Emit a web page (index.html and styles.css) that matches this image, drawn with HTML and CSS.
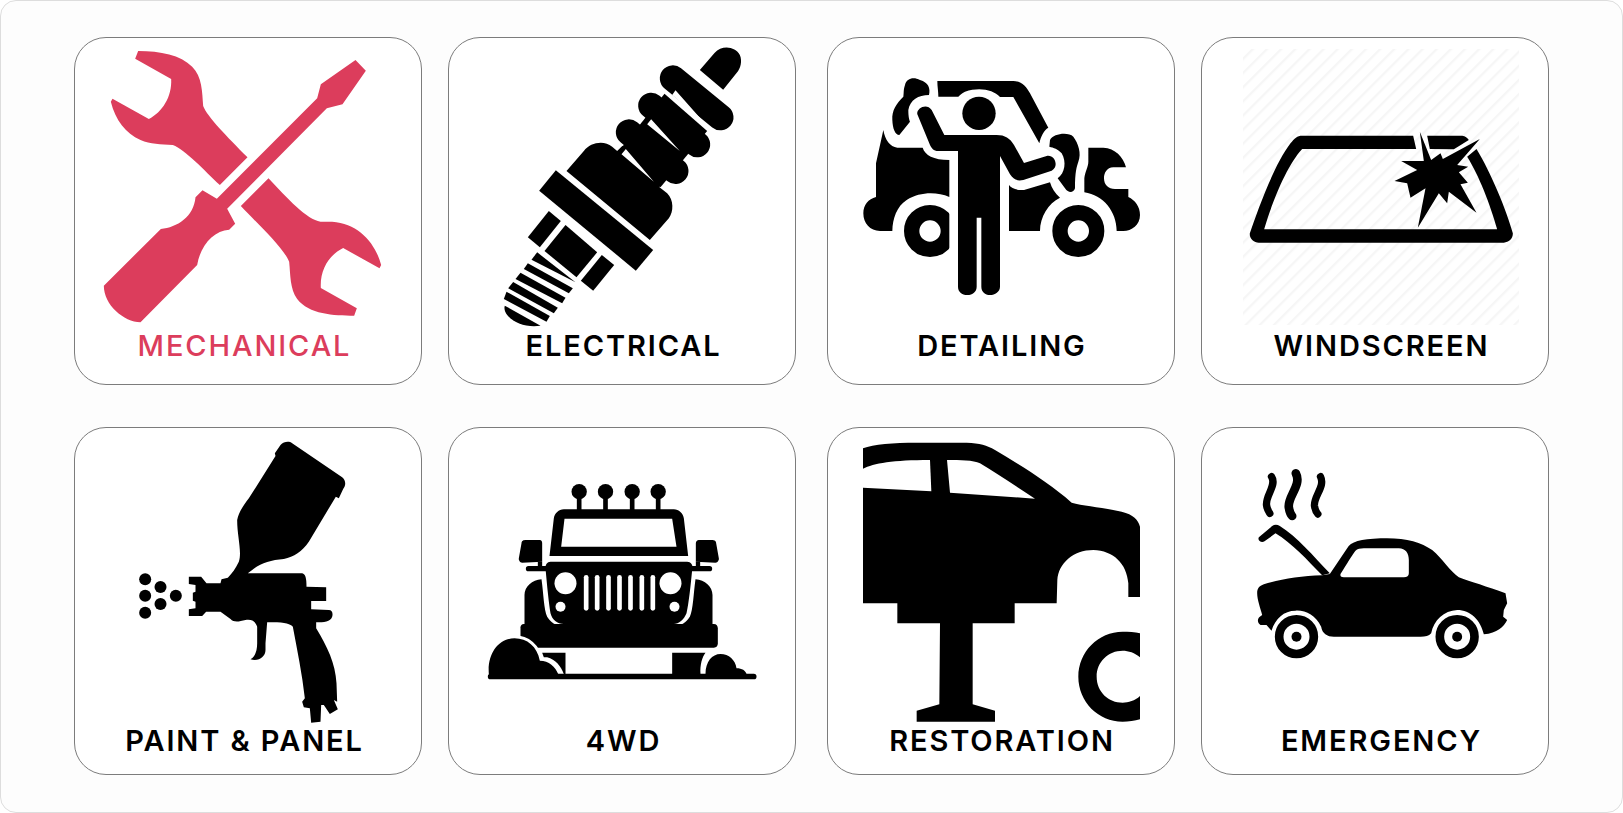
FILE: index.html
```html
<!DOCTYPE html>
<html lang="en">
<head>
    <meta charset="UTF-8">
    <meta name="viewport" content="width=device-width, initial-scale=1.0">
    <title>Services</title>
    <link rel="stylesheet" href="styles.css">
</head>
<body>
    <main class="panel">
        <div class="service-grid">
            <a class="card card-active">
                <svg class="card-icon" viewBox="136.5 72 828 828" aria-hidden="true">
                    <path d="M233 78C300 78 360 90 395 125C425 155 425 200 428 243C440 275 500 335 561 397L478 480C430 435 375 375 337 360C300 358 270 358 240 345C195 325 165 285 151 230L156 221L265 282C305 262 335 215 332 162L224 101Z"/>
                    <path d="M624 460L541 543C590 595 670 670 686 710C690 750 688 790 710 822C745 868 820 872 881 872L889 850L781 789C778 735 805 690 848 669L957 730L962 720C945 655 895 595 815 590L780 590C740 585 680 520 624 460Z"/>
                    <path d="M885 105L916 137L846 238L799 250L500 551L524 596L506 614C460 617 420 660 410 720L240 892C190 890 130 840 130 782L301 612C350 608 400 575 405 517L426 496L469 521L770 220L781 178Z"/>
                </svg>
                <span class="card-label">MECHANICAL</span>
            </a>

            <a class="card">
                <svg class="card-icon" viewBox="133.5 72 828 828" aria-hidden="true">
                    <path d="M778 135L822 84C845 58 885 65 898 90C906 108 900 130 890 142L848 194Z"/>
                    <path d="M697 160L840 277M632 242L770 358M565 322L705 438" fill="none" stroke="#000" stroke-width="78" stroke-linecap="round"/>
                    <path d="M672 206L540 372L660 487L800 318Z"/>
                    <path d="M378 438L430 378C450 352 490 345 515 365L530 378L546 362L660 480L657 487L680 505C700 525 700 560 685 580L628 645Z"/>
                    <path class="cut" d="M695 210L705 196L790 292ZM620 298L632 283L718 378ZM543 388L556 372L640 470Z"/>
                    <path d="M346 436L638 675L586 737L296 497Z"/>
                    <path d="M375 600L470 682L408 757L312 678Z"/>
                    <path d="M325 558L361 588L298 667L262 637Z"/>
                    <path d="M484 690L521 720L458 797L421 767Z"/>
                    <path d="M290 682L405 772L273 704Z"/>
                    <path d="M262 715L397 790L385 805L250 732Z"/>
                    <path d="M240 743L375 818L365 835L225 762Z"/>
                    <path d="M218 771L352 848L340 865L203 790Z"/>
                    <path d="M198 800L328 873L318 890L190 822Z"/>
                    <path d="M193 842L300 902C260 908 220 895 200 870C193 860 190 850 193 842Z"/>
                </svg>
                <span class="card-label">ELECTRICAL</span>
            </a>

            <a class="card">
                <svg class="card-icon" viewBox="129 72 828 828" aria-hidden="true">
                    <path d="M352 168L580 168C605 168 620 185 630 205L685 308C672 315 662 335 658 355L580 216L540 216C520 195 480 185 435 200C425 205 420 210 415 215L355 215C355 200 352 185 352 168Z"/>
                    <path d="M255 180C260 160 280 155 300 165C325 172 332 190 327 210C295 210 270 225 265 255C265 275 268 285 270 290L238 330C225 330 218 310 217 285C215 255 230 235 250 215C252 200 250 195 255 180Z"/>
                    <path d="M190 315C195 345 210 365 232 368L308 368C315 390 340 405 388 405L388 516C350 500 300 500 260 525C230 545 218 580 217 618L180 618C150 618 130 595 130 565C130 540 145 522 168 516L168 415Z"/>
                    <circle cx="330" cy="618" r="55" fill="none" stroke="#000" stroke-width="46"/>
                    <rect class="cut" x="388" y="530" width="26" height="175"/>
                    <path d="M567 480C575 490 590 497 612 495L690 472C695 490 705 505 720 518C685 535 660 575 660 618L567 618Z"/>
                    <path d="M690 345C700 325 745 320 760 335C775 355 785 385 775 410C770 425 765 440 765 490C760 505 745 505 735 490L713 460C735 445 740 410 725 385C715 372 700 368 688 365Z"/>
                    <path d="M805 368L850 368C885 370 910 395 918 427L880 427C860 427 852 445 852 460C852 480 865 492 885 492L925 492L925 516C945 525 960 545 960 570C960 600 935 618 910 618L890 618C890 560 850 510 793 502L793 460C795 440 805 425 805 410Z"/>
                    <circle cx="775" cy="618" r="55" fill="none" stroke="#000" stroke-width="46"/>
                    <circle cx="477" cy="265" r="50"/>
                    <path d="M292 268C288 250 320 232 335 255L373 330L530 330C555 330 570 340 582 360L612 414L680 393C705 388 718 425 695 437L610 465C590 470 580 462 570 448L540 393L540 785C540 800 525 810 510 810C495 810 484 800 484 785L484 578L470 578L470 785C470 800 458 810 442 810C425 810 414 800 414 785L414 378L355 378C340 378 335 370 330 360Z"/>
                </svg>
                <span class="card-label">DETAILING</span>
            </a>

            <a class="card">
                <svg class="card-icon" viewBox="157.5 72 828 828" aria-hidden="true">
                    <defs>
                        <pattern id="hatch" width="30" height="30" patternUnits="userSpaceOnUse" patternTransform="rotate(45)">
                            <rect width="7" height="30" fill="#f6f6f6"/>
                        </pattern>
                    </defs>
                    <rect x="157.5" y="72" width="828" height="828" fill="url(#hatch)"/>
                    <path d="M178 625C200 560 250 420 300 355C312 340 320 332 335 332L668 332L677 372L335 372C290 420 245 530 221 613L920 613C900 540 865 450 830 395L858 372C900 440 950 560 967 625C968 640 955 653 940 653L205 653C190 653 176 640 178 625Z"/>
                    <path d="M710 332L815 332C825 333 830 338 835 345L790 373L718 372Z"/>
                    <path d="M688 320L722 405L750 385L757 402L868 342L800 420L833 425L805 442L832 473L810 478L858 563L775 500L770 535L745 505L682 608L705 490L660 518L650 475L612 468L680 435L632 408L700 408Z"/>
                </svg>
                <span class="card-label">WINDSCREEN</span>
            </a>

            <a class="card">
                <svg class="card-icon" viewBox="136.5 72 828 828" aria-hidden="true">
                    <path d="M660 75C670 65 685 62 695 70L845 172C855 180 858 195 848 207L835 235L826 230L745 365C725 395 700 410 670 417C630 420 600 430 575 450L562 460L725 460C735 462 738 475 738 500L797 502L797 543L752 543L752 568L805 570C815 570 818 580 815 590C810 605 790 607 767 607L767 625C800 680 825 730 828 790L830 845L820 840L832 868L808 882L790 855L782 855L780 905L752 908L748 865L730 862L725 845L733 835C725 760 710 690 697 620C690 612 670 605 620 607L615 670L615 690C615 710 595 725 570 718C585 710 590 690 590 670L590 620C585 605 575 597 555 600C535 605 520 608 510 597L480 575L437 575L425 588L385 588L385 568L405 565L405 545L397 542L397 518L405 515L405 495L385 492L385 470L422 470L438 490L480 490L483 478L502 473C515 460 525 445 535 425C545 395 530 350 530 300C535 275 550 255 565 235L645 108L643 100Z"/>
                    <circle cx="254" cy="478" r="18"/>
                    <circle cx="300" cy="501" r="18"/>
                    <circle cx="254" cy="527" r="18"/>
                    <circle cx="346" cy="527" r="18"/>
                    <circle cx="300" cy="552" r="18"/>
                    <circle cx="254" cy="578" r="18"/>
                </svg>
                <span class="card-label">PAINT &amp; PANEL</span>
            </a>

            <a class="card">
                <svg class="card-icon" viewBox="133.5 72 828 828" aria-hidden="true">
                    <circle cx="416" cy="215" r="23"/>
                    <circle cx="495" cy="215" r="23"/>
                    <circle cx="575" cy="215" r="23"/>
                    <circle cx="653" cy="215" r="23"/>
                    <path d="M409 215h14v60h-14zM488 215h14v60h-14zM568 215h14v60h-14zM646 215h14v60h-14z"/>
                    <path fill-rule="evenodd" d="M327 408L340 295C342 280 355 268 370 268L700 268C715 268 728 280 730 295L743 408ZM372 296L362 380L708 380L695 296Z"/>
                    <path d="M243 370C243 362 250 360 255 360L298 360C303 360 305 365 305 370L305 425L245 428C238 428 234 420 235 415Z"/>
                    <path d="M827 370C827 362 820 360 815 360L775 360C770 360 766 365 766 370L766 425L825 428C832 428 836 420 835 415Z"/>
                    <rect x="256" y="438" width="70" height="16" rx="8"/>
                    <rect x="745" y="438" width="70" height="16" rx="8"/>
                    <path d="M292 425h13v20h-13zM766 425h13v20h-13z"/>
                    <path d="M330 425L740 425C750 425 760 435 755 450C750 500 745 550 738 580C730 600 715 612 700 612L370 612C350 612 335 600 330 580C325 550 320 500 315 445C314 435 320 425 330 425Z"/>
                    <g class="cut">
                        <circle cx="375" cy="490" r="33"/>
                        <circle cx="690" cy="490" r="33"/>
                        <circle cx="360" cy="560" r="15"/>
                        <circle cx="702" cy="560" r="15"/>
                        <rect x="430" y="465" width="14" height="107" rx="7"/>
                        <rect x="463" y="465" width="14" height="107" rx="7"/>
                        <rect x="497" y="465" width="14" height="107" rx="7"/>
                        <rect x="530" y="465" width="14" height="107" rx="7"/>
                        <rect x="563" y="465" width="14" height="107" rx="7"/>
                        <rect x="597" y="465" width="14" height="107" rx="7"/>
                        <rect x="630" y="465" width="14" height="107" rx="7"/>
                    </g>
                    <path d="M303 478C309 520 310 570 320 590C330 605 340 612 345 612L252 612L252 525C252 500 275 480 303 478Z"/>
                    <path d="M765 478C759 520 758 570 748 590C738 605 728 612 723 612L816 612L816 525C816 500 793 480 765 478Z"/>
                    <path d="M250 612L820 612C828 612 832 618 832 625L832 670C832 678 828 683 820 683L250 683C243 683 240 678 240 670L240 622C240 616 244 612 250 612Z"/>
                    <path d="M305 698L375 698L375 762L370 762C362 740 345 718 320 712L310 712Z"/>
                    <path d="M695 698L795 698C785 710 778 735 780 762L695 762Z"/>
                    <path class="halo" d="M145 762C140 700 175 655 222 655C260 655 290 680 298 722C325 722 345 740 353 762Z"/>
                    <path d="M795 762C795 725 815 702 840 702C865 702 885 720 888 745C905 745 915 752 918 762Z"/>
                    <rect x="142" y="761" width="806" height="17" rx="8"/>
                </svg>
                <span class="card-label">4WD</span>
            </a>

            <a class="card">
                <svg class="card-icon" viewBox="129 72 828 828" aria-hidden="true">
                    <path d="M129 85C160 72 220 68 290 68L440 68C480 70 500 75 525 90C600 135 690 190 755 248C790 258 850 262 905 275C940 283 955 300 960 320L960 531L925 531L925 490C920 430 880 392 820 390C760 390 715 430 712 480L710 550L584 550L584 610L458 610L458 853L525 872L525 905L290 905L290 872L358 853L360 610L232 610L232 550L129 550Z"/>
                    <path class="cut" d="M129 146C160 130 220 120 330 120L334 214L129 203Z"/>
                    <path class="cut" d="M381 120C420 120 460 120 480 130C530 160 590 200 645 236L390 218Z"/>
                    <path d="M960 640C945 636 925 635 908 635C835 635 775 695 775 770C775 845 835 905 908 905C925 905 945 903 960 898L960 828C945 842 925 848 908 848C865 848 830 815 830 770C830 725 865 692 908 692C925 692 945 698 960 712Z"/>
                </svg>
                <span class="card-label">RESTORATION</span>
            </a>

            <a class="card">
                <svg class="card-icon" viewBox="157.5 72 828 828" aria-hidden="true">
                    <path d="M243 170C260 195 225 225 228 255C230 270 235 275 238 280" fill="none" stroke="#000" stroke-width="22" stroke-linecap="round"/>
                    <path d="M316 160C335 195 290 230 295 262C297 275 302 285 305 288" fill="none" stroke="#000" stroke-width="26" stroke-linecap="round"/>
                    <path d="M390 170C405 200 368 230 372 258C374 270 378 278 382 282" fill="none" stroke="#000" stroke-width="22" stroke-linecap="round"/>
                    <path d="M205 352L245 318C252 313 260 313 268 318C320 350 370 410 418 460L395 466C350 420 305 370 255 340L222 364C212 370 200 360 205 352Z"/>
                    <path d="M200 520C200 505 206 498 220 493C270 478 330 468 395 466L418 462L470 385C480 365 510 358 570 355C640 352 690 365 725 390C755 415 780 455 805 472C840 485 890 500 945 520L950 550L940 570L938 590L950 600C940 620 920 640 880 643C870 600 840 570 800 570C760 572 730 600 722 640C715 648 705 650 690 650L430 650C410 650 395 640 392 620C375 585 345 570 315 572C280 572 255 595 243 632L228 615L210 615C200 610 200 595 208 590L215 585C210 565 200 540 200 520Z"/>
                    <path class="cut" d="M450 462C470 430 485 405 495 392C500 387 510 385 520 385L625 385C645 385 655 400 655 420L655 460C655 468 650 472 640 472L460 472C452 472 448 468 450 462Z"/>
                    <circle cx="318" cy="650" r="52" fill="none" stroke="#000" stroke-width="26"/>
                    <circle cx="318" cy="650" r="15"/>
                    <circle cx="800" cy="650" r="52" fill="none" stroke="#000" stroke-width="26"/>
                    <circle cx="800" cy="650" r="15"/>
                </svg>
                <span class="card-label">EMERGENCY</span>
            </a>
        </div>
    </main>
</body>
</html>
```

FILE: styles.css
```css
* {
    box-sizing: border-box;
    margin: 0;
    padding: 0;
}

body {
    background: #fff;
    font-family: Inter, 'Liberation Sans', sans-serif;
}

.panel {
    height: 813px;
    padding: 36px 0 0 73px;
    background: #fdfdfd;
    border: 1px solid #ddd;
    border-radius: 16px;
}

.service-grid {
    display: grid;
    grid-template-columns: 374px 379px 374px 348px;
    row-gap: 42px;
}

.card {
    display: flex;
    flex-direction: column;
    align-items: center;
    width: 348px;
    height: 348px;
    padding-top: 11px;
    background: #fff;
    border: 1px solid #7c7c7c;
    border-radius: 32px;
    color: #000;
}

/* the artwork does not sit quite in the middle of its card */
.card:nth-child(4n+1) {
    padding-right: 9px;
}

.card:nth-child(4n+2) {
    padding-left: 1px;
}

.card:nth-child(4n) {
    padding-left: 11px;
}

.card:nth-child(n+5) {
    padding-top: 16px;
}

.card-icon {
    flex-shrink: 0;
    width: 276px;
    height: 276px;
    overflow: visible;
}

.card-label {
    margin-top: 4px;
    padding-left: 2px;
    font-size: 29px;
    line-height: 34px;
    font-weight: 600;
    letter-spacing: 1.9px;
    white-space: nowrap;
}

.card-active {
    color: #dc3d5c;
}

.card-active .card-icon {
    fill: #dc3d5c;
}

.card-active .card-label {
    font-weight: 500;
}

.cut {
    fill: #fff;
}

.halo {
    stroke: #fff;
    stroke-width: 18px;
    paint-order: stroke;
}
```
